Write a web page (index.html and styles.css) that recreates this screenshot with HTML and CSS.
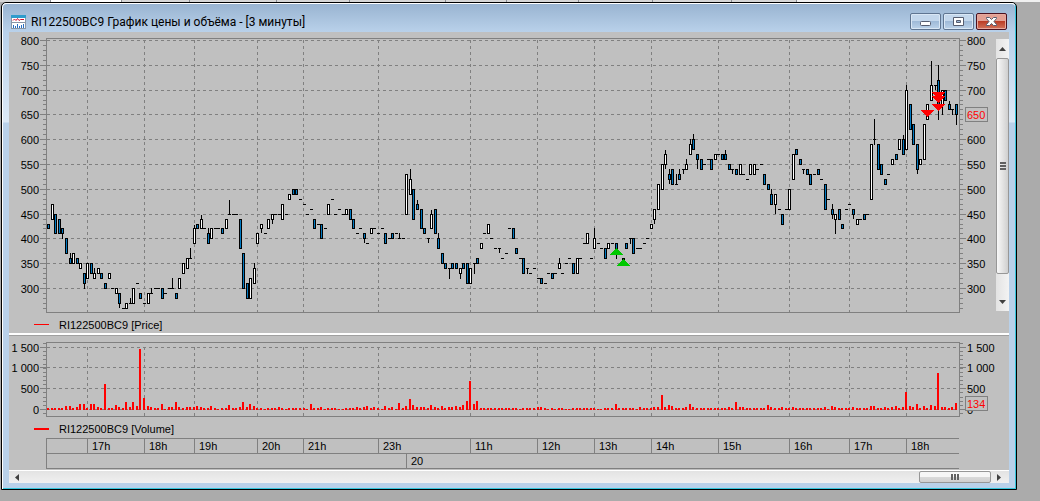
FILE: index.html
```html
<!DOCTYPE html>
<html lang="ru">
<head>
    <meta charset="UTF-8">
    <meta name="viewport" content="width=device-width, initial-scale=1.0">
    <title>RI122500BC9</title>
    <link rel="stylesheet" href="styles.css">
</head>
<body>
    <!-- Tab strip of the parent window -->
    <div class="tab-strip" id="tabStrip"></div>

    <main class="window">
        <header class="titlebar">
            <svg class="app-icon" viewBox="0 0 15 14" aria-hidden="true">
                <rect width="15" height="14" fill="#8a97a5"/>
                <rect width="15" height="3" fill="#2f9ccc"/>
                <rect x="1" y="3" width="13" height="4" fill="#fff"/>
                <rect x="1" y="8" width="13" height="5" fill="#fff"/>
                <path d="M2 5.5 3.5 4 5 5.500 6.500 3.500 8 5.500 9.500 4.500H13" fill="none" stroke="#d01030"/>
                <path d="M2.500 13v-3M4.500 13v-2M6.500 13v-4M8.500 13v-2M10.500 13v-3M12.500 13v-4" stroke="#2a6fc0"/>
            </svg>
            <h1 class="title">RI122500BC9 График цены и объёма - [3 минуты]</h1>
            <div class="caption-buttons">
                <button class="caption-btn" type="button" aria-label="Свернуть">
                    <svg viewBox="0 0 29 15"><rect x="9.500" y="7.500" width="10" height="4" rx="1" fill="#fff" stroke="#565d70"/></svg>
                </button>
                <button class="caption-btn" type="button" aria-label="Развернуть">
                    <svg viewBox="0 0 29 15"><path d="M9.500 3.500h10v8h-10zM12.500 6.500v2h4v-2z" fill="#fff" fill-rule="evenodd" stroke="#565d70"/></svg>
                </button>
                <button class="caption-btn caption-close" type="button" aria-label="Закрыть">
                    <svg viewBox="0 0 29 15"><path d="M9.500 3.500h3l2 2 2-2h3v1l-2.500 3 2.500 3v1h-3l-2-2-2 2h-3v-1l2.500-3-2.500-3z" fill="#fff" stroke="#565d70"/></svg>
                </button>
            </div>
        </header>

        <div class="content">
            <section class="panel" aria-label="Price">
                <div class="plot-row price-row">
                    <svg class="axis" id="priceLeft"></svg>
                    <svg class="plot" id="pricePlot" viewBox="0 0 914 275" preserveAspectRatio="none"></svg>
                    <svg class="axis" id="priceRight"></svg>
                    <div class="vscroll">
                        <button class="scroll-btn" type="button" aria-label="Вверх"><svg viewBox="0 0 7 4"><path d="M0 4 3.500 0 7 4z"/></svg></button>
                        <div class="thumb"><span class="grip"></span></div>
                        <button class="scroll-btn" type="button" aria-label="Вниз"><svg viewBox="0 0 7 4"><path d="M0 0h7L3.500 4z"/></svg></button>
                    </div>
                </div>
                <div class="legend"><span class="legend-line"></span>RI122500BC9 [Price]</div>
            </section>

            <div class="splitter"></div>

            <section class="panel" aria-label="Volume">
                <div class="plot-row volume-row">
                    <svg class="axis" id="volumeLeft"></svg>
                    <svg class="plot" id="volumePlot" viewBox="0 0 914 75" preserveAspectRatio="none"></svg>
                    <svg class="axis" id="volumeRight"></svg>
                </div>
                <div class="legend legend-volume"><span class="legend-line"></span>RI122500BC9 [Volume]</div>
            </section>

            <div class="timeline">
                <div class="time-row" id="hours"></div>
                <div class="time-row" id="days"></div>
            </div>

            <div class="hscroll">
                <button class="scroll-btn" type="button" aria-label="Влево"><svg viewBox="0 0 4 7"><path d="M4 0v7L0 3.500z"/></svg></button>
                <div class="thumb"><span class="grip"></span></div>
                <button class="scroll-btn" type="button" aria-label="Вправо"><svg viewBox="0 0 4 7"><path d="M0 0v7L4 3.500z"/></svg></button>
            </div>
        </div>
    </main>

    <script src="chart.js"></script>
</body>
</html>
```

FILE: styles.css
```css
* {
    margin: 0;
    padding: 0;
    box-sizing: border-box;
}

body {
    background: #ababab;
    color: #000;
    font-family: "Liberation Sans", Arial, sans-serif;
    font-size: 11px;
    line-height: 14px;
}

button {
    border: 0;
    background: none;
    display: block;
}

svg {
    display: block;
}

/* Parent window */
.tab-strip {
    display: flex;
    height: 2px;
    background: #f0f0f0;
}

.tab {
    background: #d6d6d6;
    border-right: 1px solid #8b8e94;
}

.tab.active {
    background: #fff;
}

/* Window frame */
.window {
    margin: 0 23px 10px 1px;
    padding: 0 7px 6px;
    border: 1px solid #000;
    border-radius: 5px 5px 0 0;
    background: linear-gradient(#b9d1ea 30px, #dce9f6 119px, #b9d1ea 120px);
    box-shadow: inset 1px 1px #fff, inset -1px -1px #35c5dc;
}

.titlebar {
    display: flex;
    align-items: center;
    height: 29px;
    margin: 0 -6px;
    padding: 7px 8px 0;
    background: linear-gradient(#99b4d1, #b9d1ea);
    border-top: 1px solid #fff;
    border-radius: 4px 4px 0 0;
}

.app-icon {
    width: 15px;
    height: 14px;
}

.title {
    flex: 1;
    margin-left: 5px;
    font-family: Roboto, "Noto Sans", sans-serif;
    font-size: 12px;
    font-weight: 400;
    line-height: 16px;
    white-space: nowrap;
}

.caption-buttons {
    display: flex;
    gap: 2px;
}

.caption-btn {
    width: 31px;
    height: 17px;
    border: 1px solid #5f7591;
    border-radius: 2px;
    background: linear-gradient(#c3d7ec 45%, #9fbad8 50%, #bcd3ea);
    box-shadow: inset 0 0 0 1px #d9e7f5;
}

.caption-close {
    border-color: #4b1220;
    background: linear-gradient(#e3a094 45%, #bb3d27 50%, #d1745c);
    box-shadow: inset 0 0 0 1px #e6a99e;
}

.content {
    padding-top: 1px;
    background: #c0c0c0;
}

/* Plots */
.panel {
    padding-top: 6px;
}

.content > .panel:first-child {
    padding-top: 5px;
}

.plot-row {
    display: grid;
    grid-template-columns: 37px 1fr 36px 13px;
    grid-template-rows: 100%;
}

.price-row {
    height: 275px;
}

.volume-row {
    height: 75px;
}

.plot,
.axis {
    width: 100%;
    height: 100%;
    overflow: visible;
    shape-rendering: crispEdges;
}

.line {
    fill: #808080;
}

.grid {
    stroke: #808080;
    stroke-dasharray: 3 3;
}

.candle {
    fill: #000;
}

.up {
    fill: #fff;
}

.down {
    fill: #0079c1;
}

.buy {
    fill: #00c800;
}

.sell,
.bar {
    fill: #f00;
}

.tag {
    fill: #c0c0c0;
    stroke: #808080;
}

.tag-text {
    fill: #f00;
}

.end {
    text-anchor: end;
}

.legend {
    display: flex;
    align-items: center;
    height: 20px;
    padding: 3px 0 0 25px;
}

.legend-line {
    width: 15px;
    height: 1px;
    margin-right: 10px;
    background: #f00;
}

.legend-volume {
    height: 21px;
    padding-top: 2px;
}

.legend-volume .legend-line {
    height: 2px;
}

.splitter {
    height: 3px;
    background: #fff;
    border-bottom: 1px solid #a0a0a0;
}

/* Time scale */
.timeline {
    margin: 0 50px 1px 37px;
    border-bottom: 1px solid #808080;
}

.time-row {
    display: flex;
    height: 15px;
    border-top: 1px solid #808080;
}

.time-cell {
    flex: none;
    padding-left: 4px;
    border-left: 1px solid #808080;
    overflow: hidden;
}

/* Scroll bars */
.vscroll {
    display: flex;
    flex-direction: column;
    height: 272px;
    margin-top: 1px;
    background: linear-gradient(90deg, #e3e3e3, #f3f3f3);
}

.vscroll .scroll-btn {
    height: 19px;
    padding: 0 3px;
}

.vscroll .thumb {
    height: 216px;
    background: linear-gradient(90deg, #f8f8f8, #e4e4e4 50%, #cfcfcf);
}

.vscroll .scroll-btn:last-child {
    margin-top: auto;
}

.vscroll .scroll-btn svg {
    width: 7px;
    height: 4px;
}

.hscroll {
    display: flex;
    height: 13px;
    border-top: 1px solid #fff;
    background: linear-gradient(#e3e3e3, #f0f0f0);
}

.hscroll .scroll-btn {
    width: 18px;
    padding-left: 6px;
}

.hscroll .scroll-btn svg {
    width: 4px;
    height: 7px;
}

.hscroll .thumb {
    width: 72px;
    margin-left: auto;
    background: linear-gradient(#f6f6f6 45%, #dadada 50%, #cfcfcf);
}

.scroll-btn path {
    fill: #404040;
}

.thumb {
    display: flex;
    align-items: center;
    justify-content: center;
    border: 1px solid #979797;
    border-radius: 2px;
}

.grip {
    width: 8px;
    height: 6px;
    background: repeating-linear-gradient(90deg, #606060 0 2px, transparent 2px 3px);
}

.vscroll .grip {
    width: 6px;
    height: 8px;
    background: repeating-linear-gradient(#606060 0 2px, transparent 2px 3px);
}
```

FILE: chart.js
```js
// [slot, open, close, high, low], high and low only where there is a wick
const candles = [
    [0,430,420],[1,440,470],[2,450,410],[3,440,410],[4,420,410,420,400],[5,400,370],[6,360,350,370,350],[7,350,370],
    [8,360,350],[9,340,350],[10,330,310,330,300],[11,320,350],[12,350,330],[13,320,330,340,320],[14,330,340],[15,330,320],
    [16,310,300],[17,320,330],[18,300,300],[19,290,300],[20,290,270,290,262],[21,260,260],[22,260,270],[23,270,270,280,270],
    [24,270,300],[25,310,310],[26,290,280],[27,270,270],[28,270,290],[29,290,290,300,290],[30,300,300],[31,300,300],
    [32,300,280],[33,290,290],[34,300,300],[35,300,300,320,300],[36,290,280],[37,300,320],[38,330,350],[39,340,360],
    [40,360,360,380,360],[41,390,420,428,390],[42,430,420],[43,420,440,448,420],[44,420,420],[45,410,390,420,390],[46,400,420],[47,420,420],
    [48,420,420],[49,420,410],[50,420,440],[51,450,450,477,450],[52,450,450],[53,450,450],[54,440,380],[55,370,300],
    [56,310,280],[57,280,320],[58,310,340,350,310],[59,390,410],[60,420,430,430,412],[61,410,410],[62,420,440],[63,440,450,450,432],
    [64,450,450],[65,450,450],[66,440,470],[67,450,450],[68,480,490],[69,500,490],[70,500,490],[71,480,480],
    [72,470,470],[73,450,450],[74,460,460],[75,440,420],[76,430,430],[77,430,400],[78,420,420],[79,450,470],
    [80,480,480],[81,450,450],[82,460,460],[83,450,450],[84,450,460],[85,460,440],[86,440,420],[87,410,410],
    [88,420,420],[89,410,400,410,392],[90,390,390],[91,410,420],[92,420,420],[93,410,410],[94,420,420],[95,410,390],
    [96,400,400],[97,410,400],[98,410,410],[99,400,400,410,400],[100,400,400],[101,450,530],[102,490,520,540,490],[103,500,440],
    [104,470,460,477,460],[105,460,420],[106,420,410],[107,400,400,400,392],[108,420,450,458,420],[109,460,410],[110,400,380,410,380],[111,370,350],
    [112,350,340],[113,340,340,340,321],[114,350,340],[115,350,340],[116,330,340,340,321],[117,350,340],[118,350,310],[119,310,340],
    [120,350,350,350,331],[121,360,350],[122,380,390],[123,410,410],[124,410,430],[125,400,400],[126,380,380],[127,380,380,380,372],
    [128,360,360],[129,370,370],[130,420,420],[131,420,400],[132,380,370],[133,360,360],[134,360,330],[135,340,340,340,331],
    [136,330,330],[137,340,340],[138,320,320],[139,320,310],[140,310,310],[141,330,330],[142,330,320],[143,330,330],
    [144,340,350,360,340],[145,330,330],[146,350,350],[147,360,360],[148,350,330],[149,330,360],[150,360,360],[151,390,390],
    [152,390,410],[153,360,360],[154,380,400,420,380],[155,390,390],[156,380,380],[157,380,360],[158,380,390],[159,390,390],
    [160,390,370,390,361],[162,360,350],[163,390,380],[164,400,400,400,391],[165,400,370],[166,380,380],[167,380,380],[168,390,390],
    [169,400,400],[170,420,430],[171,440,460,460,432],[172,460,510],[173,500,550],[174,550,570,579,542],[175,530,520,540,511],[176,540,510],
    [177,510,510,530,510],[178,530,520,539,520],[179,540,540,540,532],[180,540,550,560,540],[181,570,590,600,570],[182,600,580,610,580],[183,570,560,570,542],[184,560,540],
    [185,550,550],[186,560,560],[187,560,540],[188,560,570],[189,570,570],[190,570,560],[191,570,560,579,560],[192,550,540],
    [193,540,540,540,532],[194,540,530],[195,530,550],[196,530,530],[197,520,520],[198,530,550],[199,530,550],[200,540,540],
    [201,550,550],[202,530,510],[203,510,500],[204,490,470,500,470],[205,470,490,490,451],[206,460,460],[207,450,430],[208,460,460],
    [209,460,500],[210,520,570],[211,580,570],[212,560,550],[213,540,540,540,532],[214,540,530],[215,530,510],[216,530,530],
    [217,540,530],[218,520,520],[219,510,460],[220,480,480],[221,460,450,469,442],[222,440,450,450,411],[223,460,440],[224,430,420],
    [225,460,460],[226,470,470],[227,460,450,460,442],[228,430,440],[229,440,440],[230,450,440],[231,450,450],[232,480,590],
    [233,600,600,640,591],[234,590,540],[235,550,530],[236,520,510],[237,530,530],[238,550,560],[239,570,560],[240,580,600],
    [241,600,570,609,570],[242,580,700,709,580],[243,670,620],[244,630,590],[245,590,540,590,531],[246,550,560],[247,560,630],[248,640,670],
    [249,680,710,758,680],[250,710,710,710,701],[251,720,660,749,641],[252,670,700,700,651],[253,700,680],[254,670,660,677,660],[255,660,660,660,651],[256,670,650,670,631]
];

// One value per slot, in units of 25 contracts
const volumes = [
    2,2,2,2,2,4,4,2,3,6,6,2,6,6,3,2,25,2,2,5,3,2,8,3,8,4,59,12,4,3,2,2,
    6,1,3,3,8,3,2,3,3,3,4,3,2,2,4,2,1,2,2,5,2,2,3,8,3,6,4,2,2,1,2,2,
    2,3,2,1,2,2,2,2,2,1,6,2,2,3,1,2,2,2,1,1,2,2,2,3,2,3,4,2,3,2,1,4,
    2,3,1,7,2,4,11,5,3,3,3,2,5,3,2,4,2,3,3,4,3,5,9,28,6,9,2,2,2,2,2,2,
    2,2,2,2,2,1,2,2,2,2,3,3,2,1,2,1,2,2,1,1,2,2,2,2,2,2,2,1,1,2,2,2,
    6,2,2,2,2,2,1,3,2,2,2,3,3,15,3,5,4,2,2,2,3,6,3,2,2,2,2,2,2,2,2,2,
    3,2,8,3,3,2,2,2,2,2,2,5,3,2,2,3,2,2,3,2,2,2,2,2,2,2,2,3,1,4,3,2,
    2,2,2,3,2,2,2,2,4,4,2,2,3,2,3,4,2,3,17,4,3,6,2,4,2,5,4,36,3,3,2,3,
    7
];

const hours = [
    [0, ''], [41, '17h'], [98, '18h'], [148, '19h'], [211, '20h'], [257, '21h'], [332, '23h'], [424, '11h'],
    [491, '12h'], [548, '13h'], [605, '14h'], [672, '15h'], [743, '16h'], [803, '17h'], [860, '18h']
];
const days = [[0, ''], [360, '20']];
const plotWidth = 914;

const slotX = i => 2 + Math.round(i * 3.545 + 0.3);
const priceY = p => 2 + Math.round((800 - p) * 0.496);
const volumeY = v => Math.round(67 - v * 0.0413);

function rect(cls, x, y, w, h) {
    return `<rect class="${cls}" x="${x}" y="${y}" width="${w}" height="${h}"/>`;
}

function draw(id, markup) {
    document.getElementById(id).innerHTML = markup;
}

// Dashed grid plus the left, top, right and bottom edges
function frame(height, rows) {
    let out = '';
    rows.forEach(y => out += `<path class="grid" d="M1 ${y + 0.5}H913"/>`);
    hours.slice(1).forEach(([x]) => out += `<path class="grid" d="M${x + 0.5} ${rows[0]}V${height - 1}"/>`);
    out += rect('line', 0, 0, plotWidth, 1) + rect('line', 0, height - 1, plotWidth, 1);
    out += rect('line', 0, 0, 1, height) + rect('line', plotWidth - 1, 0, 1, height);
    return out;
}

function candle([slot, open, close, high, low]) {
    const x = slotX(slot);
    const top = priceY(Math.max(open, close));
    const bottom = priceY(Math.min(open, close));
    let out = rect('candle', x - 1, top, 3, bottom - top + 1);
    if (high) {
        out += rect('candle', x, priceY(high), 1, priceY(low) - priceY(high) + 1);
    }
    if (open !== close) {
        out += rect(close > open ? 'up' : 'down', x, top + 1, 1, bottom - top - 1);
    }
    return out;
}

// Trade markers: tip up for a buy, tip down for a sell
function marker(cls, slot, y) {
    const x = slotX(slot) + 0.5;
    const tip = cls === 'buy' ? y - 7 : y + 7;
    return `<path class="${cls}" d="M${x - 6.5} ${y}h13L${x} ${tip}z"/>`;
}

function axis(side, ticks, minor) {
    const left = side === 'left';
    let out = '';
    minor.forEach(y => out += rect('line', left ? 34 : 0, y, 3, 1));
    ticks.forEach(([y, label]) => {
        out += rect('line', left ? 31 : 0, y, 6, 1);
        out += `<text ${left ? 'class="end" x="30"' : 'x="7"'} y="${y + 5}">${label}</text>`;
    });
    return out;
}

function tag(y, value) {
    return `<rect class="tag" x="5.5" y="${y + 0.5}" width="22" height="14"/><text class="tag-text" x="7" y="${y + 12}">${value}</text>`;
}

function cells(id, list) {
    draw(id, list.map(([x, label], i) => {
        const end = i + 1 < list.length ? list[i + 1][0] : plotWidth - 1;
        return `<div class="time-cell" style="width: ${(end - x) / (plotWidth - 1) * 100}%">${label}</div>`;
    }).join(''));
}

// Price
const prices = [800, 750, 700, 650, 600, 550, 500, 450, 400, 350, 300];
const priceTicks = prices.map(p => [priceY(p), p]);
const priceMinor = [];
for (let p = 260; p < 800; p += 10) {
    priceMinor.push(priceY(p));
}
draw('priceLeft', axis('left', priceTicks, priceMinor));
draw('priceRight', axis('right', priceTicks.filter(t => t[1] !== 650), priceMinor) + tag(69, 650));
draw('pricePlot', frame(275, prices.map(priceY)) + candles.map(candle).join('') +
    marker('buy', 160, 217) + marker('buy', 162, 228) +
    marker('sell', 248, 72) + marker('sell', 251, 54) + marker('sell', 251, 58) + marker('sell', 251, 66));

// Volume
const volumeTicks = [[5, '1 500'], [25, '1 000'], [46, '500'], [67, '0']];
const volumeMinor = [];
for (let v = -100; v <= 1600; v += 100) {
    volumeMinor.push(volumeY(v));
}
draw('volumeLeft', axis('left', volumeTicks, volumeMinor));
draw('volumeRight', axis('right', volumeTicks, volumeMinor) + tag(54, 134));
draw('volumePlot', frame(75, volumeTicks.map(t => t[0])) + volumes.map((v, i) => {
    const top = volumeY(v * 25);
    return rect('bar', slotX(i) - 1, top + 1, 2, 67 - top);
}).join(''));

cells('hours', hours);
cells('days', days);

// Tabs, by the position of their right edge
let tabStart = 0;
[51, 122, 190, 277, 350, 446, 507, 579, 653, 732, 797].forEach((edge, i) => {
    const width = edge - tabStart;
    document.getElementById('tabStrip').innerHTML += `<div class="tab${i === 1 ? ' active' : ''}" style="width: ${width}px"></div>`;
    tabStart = edge;
});
```
